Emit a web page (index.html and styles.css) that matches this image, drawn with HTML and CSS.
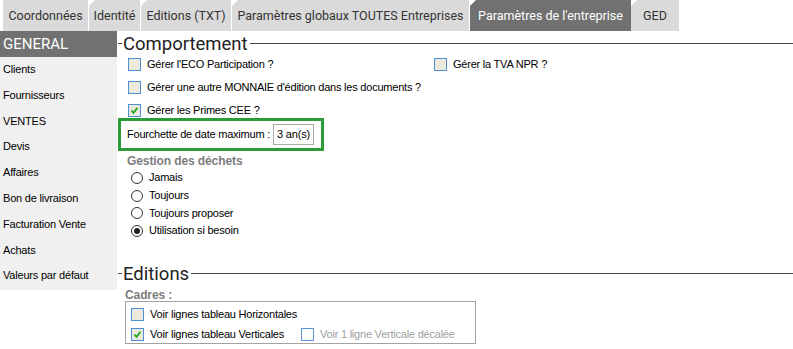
FILE: index.html
```html
<!DOCTYPE html>
<html lang="fr">
<head>
<meta charset="utf-8">
<link rel="stylesheet" href="styles.css">
</head>
<body>
<div class="tabs">
  <div class="tab first w1">Coordonnées</div>
  <div class="tab w2">Identité</div>
  <div class="tab w3">Editions (TXT)</div>
  <div class="tab w4">Paramètres globaux TOUTES Entreprises</div>
  <div class="tab active w5">Paramètres de l'entreprise</div>
  <div class="tab w6">GED</div>
</div>
<div class="main">
  <aside class="side">
    <div class="side-head">GENERAL</div>
    <div class="side-list">
      <div class="side-item">Clients</div>
      <div class="side-item">Fournisseurs</div>
      <div class="side-item">VENTES</div>
      <div class="side-item">Devis</div>
      <div class="side-item">Affaires</div>
      <div class="side-item">Bon de livraison</div>
      <div class="side-item">Facturation Vente</div>
      <div class="side-item">Achats</div>
      <div class="side-item">Valeurs par défaut</div>
    </div>
  </aside>
  <section class="content">
    <div class="legend"><span class="stub"></span><span class="legend-text">Comportement</span><span class="legend-line"></span></div>
    <div class="cbrow r1">
      <div class="cbitem col1"><span class="cb"></span><span class="lbl">Gérer l'ECO Participation ?</span></div>
      <div class="cbitem"><span class="cb"></span><span class="lbl">Gérer la TVA NPR ?</span></div>
    </div>
    <div class="cbrow r2">
      <div class="cbitem"><span class="cb"></span><span class="lbl">Gérer une autre MONNAIE d'édition dans les documents ?</span></div>
    </div>
    <div class="cbrow r3">
      <div class="cbitem"><span class="cb checked"><svg viewBox="0 0 11 11" width="11" height="11"><path d="M2.5 5.5 L4.5 7.8 L8.5 2.8" fill="none" stroke="#1ea61e" stroke-width="1.8"/></svg></span><span class="lbl">Gérer les Primes CEE ?</span></div>
    </div>
    <div class="greenbox">
      <span class="lbl">Fourchette de date maximum :</span>
      <span class="input">3 an(s)</span>
    </div>
    <div class="group-title gestion">Gestion des déchets</div>
    <div class="radios">
      <div class="radio-row"><span class="radio"></span><span class="lbl">Jamais</span></div>
      <div class="radio-row"><span class="radio"></span><span class="lbl">Toujours</span></div>
      <div class="radio-row"><span class="radio"></span><span class="lbl">Toujours proposer</span></div>
      <div class="radio-row"><span class="radio on"></span><span class="lbl">Utilisation si besoin</span></div>
    </div>
    <div class="legend editions"><span class="stub"></span><span class="legend-text">Editions</span><span class="legend-line"></span></div>
    <div class="group-title cadres">Cadres :</div>
    <div class="framebox">
      <div class="cbrow">
        <div class="cbitem"><span class="cb"></span><span class="lbl">Voir lignes tableau Horizontales</span></div>
      </div>
      <div class="cbrow r2b">
        <div class="cbitem col1b"><span class="cb checked"><svg viewBox="0 0 11 11" width="11" height="11"><path d="M2.5 5.5 L4.5 7.8 L8.5 2.8" fill="none" stroke="#1ea61e" stroke-width="1.8"/></svg></span><span class="lbl">Voir lignes tableau Verticales</span></div>
        <div class="cbitem disabled"><span class="cb white"></span><span class="lbl">Voir 1 ligne Verticale décalée</span></div>
      </div>
    </div>
  </section>
</div>
</body>
</html>
```
FILE: styles.css
```css
* { box-sizing: border-box; }
html, body { margin: 0; padding: 0; background: #fff; }
body {
  width: 793px;
  height: 349px;
  overflow: hidden;
  font-family: "Liberation Sans", Arial, sans-serif;
  font-size: 11px;
  color: #000;
}

/* Tabs */
.tabs {
  display: flex;
  height: 31px;
  padding-left: 3px;
  gap: 1px;
}
.tab {
  background: #dadada;
  color: #333;
  font-family: Roboto, "Liberation Sans", sans-serif;
  font-size: 12.5px;
  line-height: 31px;
  text-align: center;
  white-space: nowrap;
  clip-path: polygon(6px 0, 100% 0, 100% 100%, 0 100%, 0 6px);
}
.tab.first { clip-path: none; }
.tab.active { background: #717171; color: #fff; }
.w1 { width: 85px; }
.w2 { width: 51px; }
.w3 { width: 90px; }
.w4 { width: 237px; }
.w5 { width: 161px; }
.w6 { width: 48px; margin-left: -1px; }

/* Main */
.main {
  display: grid;
  grid-template-columns: 117px 1fr;
}
.side-head {
  height: 26px;
  background: #717171;
  color: #fff;
  font-family: Roboto, "Liberation Sans", sans-serif;
  font-size: 15px;
  line-height: 26px;
  padding-left: 3px;
}
.side-list {
  background: #f0f0f0;
  height: 233px;
}
.side-item {
  height: 25.8px;
  line-height: 25.8px;
  padding-left: 3px;
  font-size: 11px;
  letter-spacing: -0.2px;
  color: #000;
}

.content {
  padding-left: 1px;
}
.legend {
  display: flex;
  align-items: center;
  height: 25px;
}
.stub { width: 4px; border-top: 1px solid #444; }
.legend-text {
  font-family: Roboto, "Liberation Sans", sans-serif;
  font-size: 18.5px;
  color: #222;
  padding: 0 2px 0 1px;
  line-height: 24px;
}
.legend-line { flex: 1; border-top: 1px solid #444; }

.cbrow { display: flex; align-items: center; height: 13px; margin-left: 10px; }
.r1 { margin-top: 2px; }
.r2 { margin-top: 10px; }
.r3 { margin-top: 10px; }
.cbitem { display: flex; align-items: center; }
.col1 { width: 306px; }
.cb {
  width: 13px;
  height: 13px;
  border: 1px solid #4f8fd6;
  background: #ece9dd;
  display: inline-flex;
  align-items: center;
  justify-content: center;
  flex: none;
}
.cb.white { background: #fff; }
.cb svg { display: block; }
.lbl { margin-left: 6px; white-space: nowrap; line-height: 13px; letter-spacing: -0.22px; }

.greenbox {
  margin-top: 1px;
  width: 206px;
  height: 33px;
  border: 3px solid #2c9b3a;
  display: flex;
  align-items: center;
  padding: 0 7px 0 0;
}
.greenbox .lbl { margin-left: 6px; }
.input {
  margin-left: auto;
  width: 41px;
  height: 21px;
  border: 1px solid #aaa;
  line-height: 19px;
  text-align: center;
  font-size: 11px;
  letter-spacing: -0.2px;
}

.group-title {
  font-weight: bold;
  color: #7d7d7d;
  font-size: 12px;
  line-height: 14px;
  margin-left: 9px;
  letter-spacing: -0.1px;
}
.gestion { margin-top: 3px; }
.radios { margin-top: 1px; }
.radio-row {
  display: flex;
  align-items: center;
  height: 17.7px;
  margin-left: 13px;
}
.radio {
  width: 12px;
  height: 12px;
  border: 1px solid #333;
  border-radius: 50%;
  background: #fff;
  display: inline-flex;
  align-items: center;
  justify-content: center;
  flex: none;
}
.radio.on::after {
  content: "";
  width: 6px;
  height: 6px;
  border-radius: 50%;
  background: #222;
}
.radio-row .lbl { margin-left: 6px; }

.editions { margin-top: 22px; height: 24px; }
.cadres { line-height: 12px; margin-top: 3px; margin-left: 7px; }
.framebox {
  margin-left: 7px;
  width: 351px;
  height: 43px;
  border: 1px solid #a3a3a3;
  padding-top: 6px;
}
.framebox .cbrow { margin-left: 5px; }
.r2b { margin-top: 7px; }
.col1b { width: 170px; }
.disabled .lbl { color: #a0a0a0; }
.disabled .cb { border-color: #5b95d8; }
```
